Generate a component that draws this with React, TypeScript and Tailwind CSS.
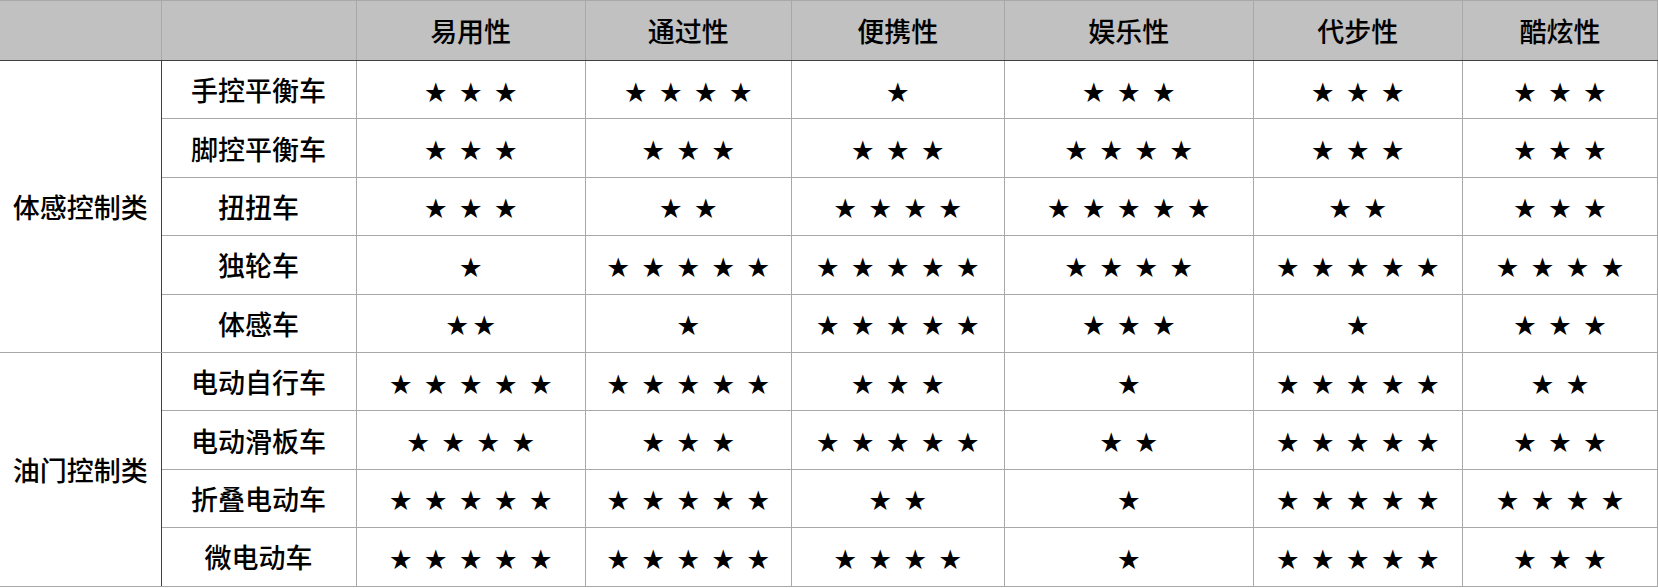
import React from "react";

type Row = { name: string; stars: (number | string)[] };
type Group = { title: string; rows: Row[] };

const columns = ["易用性", "通过性", "便携性", "娱乐性", "代步性", "酷炫性"];

const groups: Group[] = [
  {
    title: "体感控制类",
    rows: [
      { name: "手控平衡车", stars: [3, 4, 1, 3, 3, 3] },
      { name: "脚控平衡车", stars: [3, 3, 3, 4, 3, 3] },
      { name: "扭扭车", stars: [3, 2, 4, 5, 2, 3] },
      { name: "独轮车", stars: [1, 5, 5, 4, 5, 4] },
      { name: "体感车", stars: ["2", 1, 5, 3, 1, 3] },
    ],
  },
  {
    title: "油门控制类",
    rows: [
      { name: "电动自行车", stars: [5, 5, 3, 1, 5, 2] },
      { name: "电动滑板车", stars: [4, 3, 5, 2, 5, 3] },
      { name: "折叠电动车", stars: [5, 5, 2, 1, 5, 4] },
      { name: "微电动车", stars: [5, 5, 4, 1, 5, 3] },
    ],
  },
];

const widths = ["w-[161px]", "w-[195px]", "w-[229px]", "w-[206px]", "w-[213px]", "w-[249px]", "w-[209px]", "w-[195px]"];

const Stars = ({ value }: { value: number | string }) => {
  const tight = typeof value === "string";
  const count = Number(value);
  return (
    <div className={`flex justify-center items-center ${tight ? "gap-[5px]" : "gap-[13px]"}`}>
      {Array.from({ length: count }, (_, i) => (
        <span key={i} className="inline-block w-[22px] text-center text-[22px] leading-none">
          ★
        </span>
      ))}
    </div>
  );
};

const App = () => {
  return (
    <div className="w-[1658px] h-[588px] bg-white overflow-hidden font-['Noto_Sans_CJK_SC','Noto_Sans',sans-serif] text-black">
      <table className="table-fixed border-collapse w-[1658px]">
        <colgroup>
          {widths.map((w, i) => (
            <col key={i} className={w} />
          ))}
        </colgroup>
        <thead>
          <tr className="h-[60px] bg-[#c0c1c0]">
            <th className="border-t border-t-[#a8a8a8] border-b border-b-[#404040]" />
            <th className="border-t border-t-[#a8a8a8] border-b border-b-[#404040] border-l border-l-[#a8a8a8]" />
            {columns.map((c) => (
              <th
                key={c}
                className="border-t border-t-[#a8a8a8] border-b border-b-[#404040] border-l border-l-[#a8a8a8] border-r border-r-[#a8a8a8] text-[27px] font-medium leading-none"
              >
                {c}
              </th>
            ))}
          </tr>
        </thead>
        <tbody>
          {groups.map((g) =>
            g.rows.map((r, ri) => (
              <tr key={r.name} className="h-[58.4px]">
                {ri === 0 && (
                  <td
                    rowSpan={g.rows.length}
                    className="border-b border-b-[#a8a8a8] border-r border-r-[#404040] text-center text-[27px] font-medium leading-none"
                  >
                    {g.title}
                  </td>
                )}
                <td className="border-b border-b-[#a8a8a8] border-l border-l-[#404040] text-center text-[27px] font-medium leading-none">
                  {r.name}
                </td>
                {r.stars.map((s, si) => (
                  <td key={si} className="border border-[#a8a8a8]">
                    <Stars value={s} />
                  </td>
                ))}
              </tr>
            ))
          )}
        </tbody>
      </table>
    </div>
  );
};

export default App;
